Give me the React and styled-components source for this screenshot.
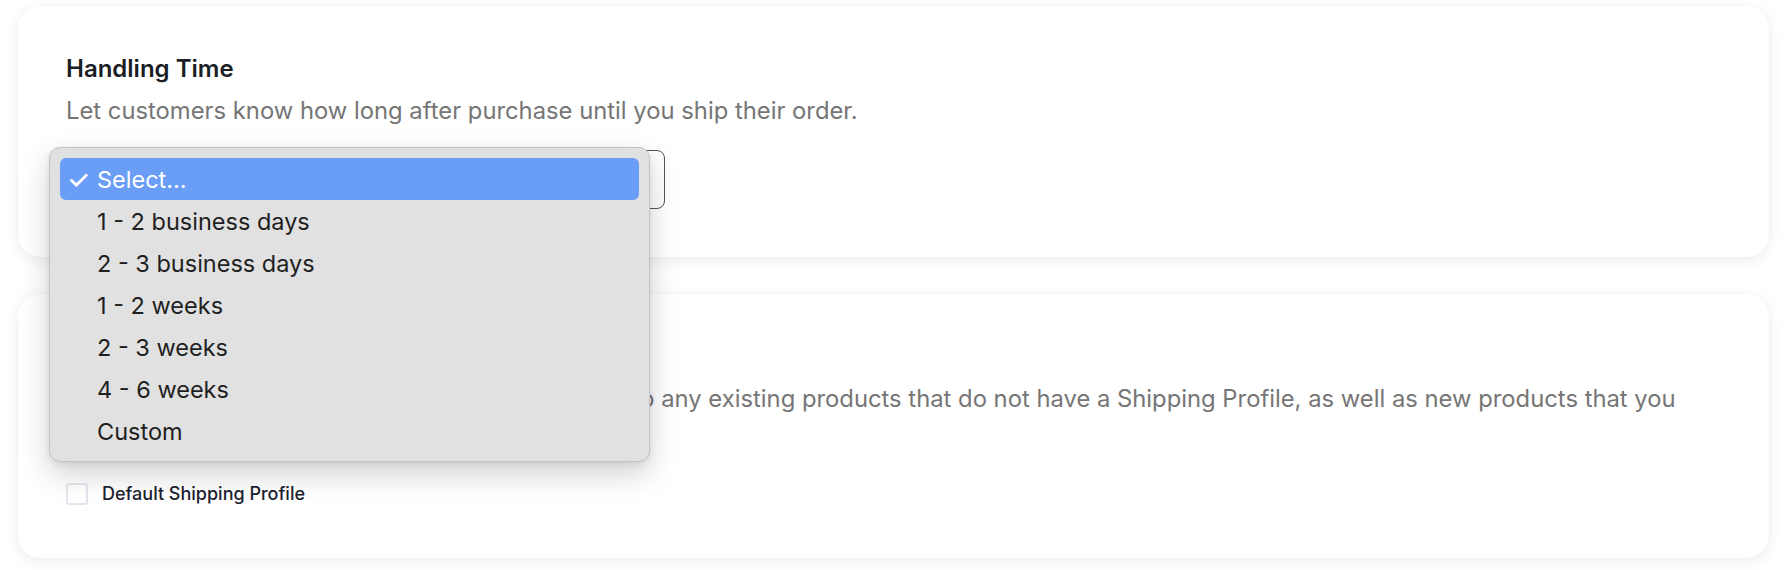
import React from "react";
import styled, { createGlobalStyle } from "styled-components";

const GlobalStyle = createGlobalStyle`
  html, body {
    margin: 0;
    padding: 0;
    background: #ffffff;
  }

  body {
    font-family: Inter, "Noto Sans", "Liberation Sans", sans-serif;
    -webkit-font-smoothing: antialiased;
  }
`;

const Page = styled.div`
  display: flex;
  flex-direction: column;
  gap: 37px;
  padding: 6px 21px 12px 18px;
`;

const Card = styled.section`
  background: #ffffff;
  border-radius: 22px;
  box-shadow: 0 3px 14px rgba(0, 0, 0, 0.08), 0 0 2px rgba(0, 0, 0, 0.03);
  padding: ${(p) => p.$pad || "48px"};
  display: flex;
  flex-direction: column;
  align-items: flex-start;
`;

const Title = styled.h2`
  margin: 0;
  font-size: 24px;
  line-height: 30px;
  font-weight: 600;
  color: #1b1e24;
`;

const Description = styled.p`
  margin: 10px 0 0;
  font-size: 23.8px;
  line-height: 34px;
  font-weight: 400;
  color: #767676;
`;

const SelectWrap = styled.div`
  position: relative;
  margin-top: 22px;
`;

const SelectBox = styled.div`
  width: 599px;
  height: 59px;
  box-sizing: border-box;
  border: 1px solid #555555;
  border-radius: 8px;
  background: #ffffff;
`;

// native-looking option list, opened over the select
const Menu = styled.ul`
  position: absolute;
  left: -17px;
  top: -3px;
  width: 601px;
  box-sizing: border-box;
  margin: 0;
  padding: 10px 10px 9px;
  list-style: none;
  background: #e1e1e1;
  border: 1px solid #c3c3c3;
  border-radius: 11px;
  box-shadow: 0 12px 30px rgba(0, 0, 0, 0.18), 0 2px 6px rgba(0, 0, 0, 0.08);
  z-index: 10;
`;

const Option = styled.li`
  display: flex;
  align-items: center;
  height: 42px;
  border-radius: 6px;
  padding-left: 7px;
  font-size: 23.5px;
  color: ${(p) => (p.$active ? "#ffffff" : "#1f1f1f")};
  background: ${(p) => (p.$active ? "#699df6" : "transparent")};
`;

const Check = styled.span`
  width: 30px;
  font-size: 26px;
  font-weight: 500;
`;

const CheckRow = styled.label`
  display: flex;
  align-items: center;
  gap: 14px;
  margin-top: 33px;
  font-size: 18px;
  line-height: 22px;
  font-weight: 500;
  color: #1d2230;
`;

const Box = styled.span`
  width: 22px;
  height: 22px;
  box-sizing: border-box;
  border: 2px solid #e1e5ec;
  border-radius: 3px;
  background: #ffffff;
`;

const options = [
  "Select...",
  "1 - 2 business days",
  "2 - 3 business days",
  "1 - 2 weeks",
  "2 - 3 weeks",
  "4 - 6 weeks",
  "Custom",
];

const App = () => {
  return (
    <>
      <GlobalStyle />
      <Page>
        <Card>
          <Title>Handling Time</Title>
          <Description>
            Let customers know how long after purchase until you ship their order.
          </Description>
          <SelectWrap>
            <SelectBox />
            <Menu>
              {options.map((o, i) => (
                <Option key={o} $active={i === 0}>
                  <Check>{i === 0 ? "✓" : ""}</Check>
                  {o}
                </Option>
              ))}
            </Menu>
          </SelectWrap>
        </Card>
        <Card $pad="48px 48px 53px 48px">
          <Title>Default Shipping Profile</Title>
          <Description>
            This default Shipping Profile automatically applies to any existing
            products that do not have a Shipping Profile, as well as new
            products that you create.
          </Description>
          <CheckRow>
            <Box />
            Default Shipping Profile
          </CheckRow>
        </Card>
      </Page>
    </>
  );
};

export default App;
